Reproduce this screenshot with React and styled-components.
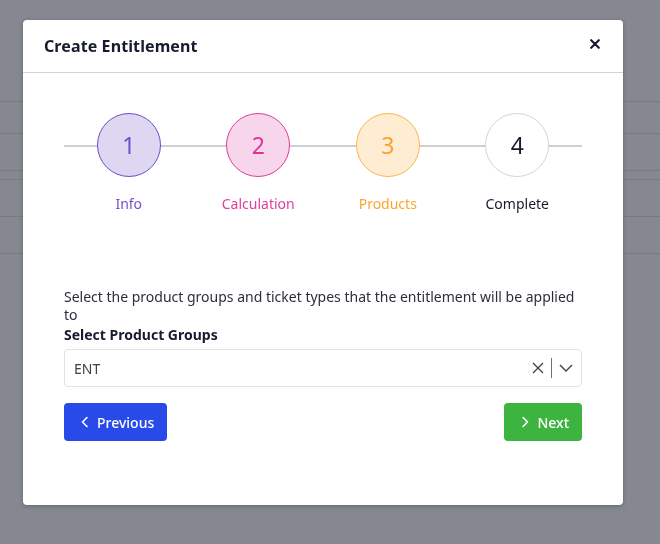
import styled, { createGlobalStyle } from 'styled-components';

const GlobalStyle = createGlobalStyle`
  html, body {
    margin: 0;
    padding: 0;
    background: #858891;
    font-family: 'Noto Sans', 'Open Sans', sans-serif;
  }
`;

// backdrop
const Page = styled.div`
  width: 660px;
  height: 544px;
  background: #858891;
  padding-top: 101px;
  box-sizing: border-box;
`;

const BgRow = styled.div`
  height: ${({ h }) => h}px;
  border-top: 1px solid #787b83;
  box-sizing: border-box;
`;

// modal
const Modal = styled.div`
  position: fixed;
  top: 20px;
  left: 23px;
  width: 600px;
  height: 485px;
  background: #fff;
  border-radius: 4px;
  box-shadow: 0 1px 4px rgba(0, 0, 0, 0.25);
  display: flex;
  flex-direction: column;
`;

const Header = styled.div`
  height: 52px;
  display: flex;
  align-items: center;
  justify-content: space-between;
  padding: 0 22px 0 21px;
  border-bottom: 1px solid #d3d4d8;
`;

const Title = styled.h2`
  margin: 0;
  font-size: 16px;
  font-weight: 700;
  color: #161b2e;
  letter-spacing: 0.1px;
`;

const Close = styled.button`
  border: 0;
  background: none;
  padding: 0;
  width: 12px;
  height: 12px;
  display: flex;
  align-items: center;
  justify-content: center;
  margin-top: -4px;
  cursor: pointer;
`;

const Body = styled.div`
  padding: 40px 41px 0 41px;
  display: flex;
  flex-direction: column;
`;

const Stepper = styled.div`
  position: relative;
  display: grid;
  grid-template-columns: repeat(4, 1fr);
  &::before {
    content: '';
    position: absolute;
    left: 0;
    right: 0;
    top: 32px;
    height: 2px;
    background: #cfcfd3;
  }
`;

const Step = styled.div`
  position: relative;
  display: flex;
  flex-direction: column;
  align-items: center;
`;

const Circle = styled.div`
  width: 62px;
  height: 62px;
  border-radius: 50%;
  border: 1px solid ${({ $border }) => $border};
  background: ${({ $bg }) => $bg};
  color: ${({ $color }) => $color};
  display: flex;
  align-items: center;
  justify-content: center;
  font-size: 23px;
  font-weight: 400;
`;

const StepLabel = styled.div`
  margin-top: 17px;
  font-size: 14px;
  color: ${({ $color }) => $color};
`;

const Description = styled.p`
  margin: 75px 0 0 0;
  font-size: 14px;
  line-height: 18px;
  color: #2b2f3a;
`;

const FieldLabel = styled.label`
  display: block;
  margin-top: 2px;
  font-size: 14px;
  line-height: 18px;
  font-weight: 700;
  color: #161b2e;
`;

const Select = styled.div`
  margin-top: 5px;
  height: 38px;
  box-sizing: border-box;
  border: 1px solid #e2e3e7;
  border-radius: 4px;
  display: flex;
  align-items: center;
  padding: 0 8px 0 9px;
`;

const SelectValue = styled.span`
  flex: 1;
  font-size: 14px;
  color: #3d414c;
`;

const SelectActions = styled.div`
  display: flex;
  align-items: center;
  gap: 7px;
`;

const Divider = styled.span`
  width: 1px;
  height: 20px;
  background: #6d707a;
`;

const Actions = styled.div`
  margin-top: 16px;
  display: flex;
  justify-content: space-between;
`;

const Button = styled.button`
  height: 38px;
  border: 0;
  border-radius: 4px;
  background: ${({ $bg }) => $bg};
  color: #fff;
  font-family: inherit;
  font-size: 14px;
  font-weight: 500;
  display: flex;
  align-items: center;
  gap: 8px;
  padding: 0 13px 0 17px;
  cursor: pointer;
`;

const steps = [
  { n: 1, label: 'Info', bg: '#ddd7f2', border: '#6a4fc6', color: '#6f4fca', labelColor: '#7152cb' },
  { n: 2, label: 'Calculation', bg: '#f7d6eb', border: '#db3d9d', color: '#d9359a', labelColor: '#df3fa0' },
  { n: 3, label: 'Products', bg: '#ffedd3', border: '#fbb54e', color: '#fca12d', labelColor: '#fca52e' },
  { n: 4, label: 'Complete', bg: '#ffffff', border: '#d4d4d6', color: '#161b2e', labelColor: '#161b2e' },
];

const Chevron = ({ dir }) => (
  <svg width="8" height="12" viewBox="0 0 8 12" fill="none">
    <path
      d={dir === 'left' ? 'M6 1.5L1.5 6L6 10.5' : 'M2 1.5L6.5 6L2 10.5'}
      stroke="#fff"
      strokeWidth="1.6"
      strokeLinecap="round"
      strokeLinejoin="round"
    />
  </svg>
);

const App = () => (
  <>
    <GlobalStyle />
    <Page>
      {[32, 37, 9, 37, 37, 1].map((h, i) => (
        <BgRow key={i} h={h} />
      ))}
    </Page>
    <Modal>
      <Header>
        <Title>Create Entitlement</Title>
        <Close aria-label="close">
          <svg width="10" height="10" viewBox="0 0 10 10">
            <path d="M1.2 1.2L8.8 8.8M8.8 1.2L1.2 8.8" stroke="#161b2e" strokeWidth="2.1" strokeLinecap="round" />
          </svg>
        </Close>
      </Header>
      <Body>
        <Stepper>
          {steps.map((s) => (
            <Step key={s.n}>
              <Circle $bg={s.bg} $border={s.border} $color={s.color}>
                {s.n}
              </Circle>
              <StepLabel $color={s.labelColor}>{s.label}</StepLabel>
            </Step>
          ))}
        </Stepper>
        <Description>
          Select the product groups and ticket types that the entitlement will be applied to
        </Description>
        <FieldLabel>Select Product Groups</FieldLabel>
        <Select>
          <SelectValue>ENT</SelectValue>
          <SelectActions>
            <svg width="12" height="12" viewBox="0 0 12 12">
              <path d="M1 1L11 11M11 1L1 11" stroke="#3d414c" strokeWidth="1.3" />
            </svg>
            <Divider />
            <svg width="14" height="8" viewBox="0 0 14 8" fill="none">
              <path d="M1 1L7 7L13 1" stroke="#3d414c" strokeWidth="1.4" />
            </svg>
          </SelectActions>
        </Select>
        <Actions>
          <Button $bg="#274ae8">
            <Chevron dir="left" />
            Previous
          </Button>
          <Button $bg="#3cb43f">
            <Chevron dir="right" />
            Next
          </Button>
        </Actions>
      </Body>
    </Modal>
  </>
);

export default App;
